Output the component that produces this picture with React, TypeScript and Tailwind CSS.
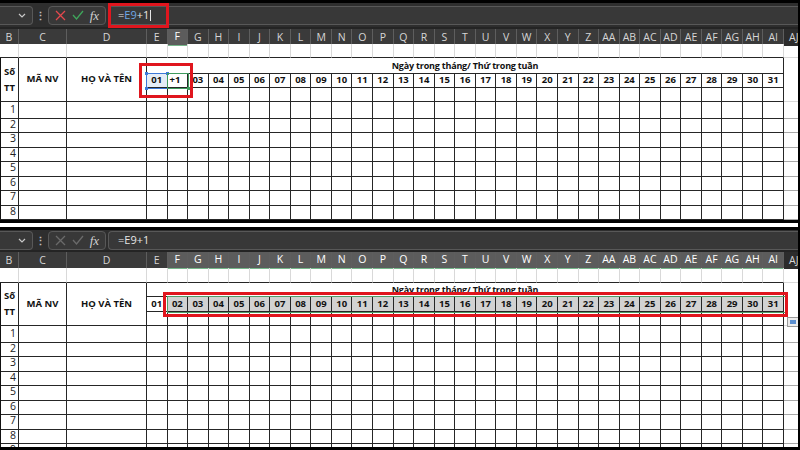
import React from 'react';

const LETTERS = ['E', 'F', 'G', 'H', 'I', 'J', 'K', 'L', 'M', 'N', 'O', 'P', 'Q', 'R', 'S', 'T', 'U', 'V', 'W', 'X', 'Y', 'Z', 'AA', 'AB', 'AC', 'AD', 'AE', 'AF', 'AG', 'AH', 'AI'];
const DAYS = LETTERS.map((_, i) => String(i + 1).padStart(2, '0'));
const ROWS = ['1', '2', '3', '4', '5', '6', '7', '8'];

const GRID = 'grid shrink-0 grid-cols-[19px_48px_80px_repeat(31,minmax(0,1fr))_14px]';
const CELL = 'border-r border-b border-[#262626]';

type Variant = 'edit' | 'fill';

const Chevron = () => (
  <svg width="8" height="5" viewBox="0 0 8 5" fill="none" stroke="#c8c8c8" strokeWidth="1.2">
    <path d="M1 1l3 3 3-3" />
  </svg>
);

function FormulaBar({ variant, h }: { variant: Variant; h: string }) {
  const edit = variant === 'edit';
  return (
    <div className={`flex shrink-0 ${h} items-center bg-[#2e2e2e]`}>
      <div className="flex h-[19px] w-[33px] items-center justify-end rounded-r-[4px] border border-l-0 border-[#585858] bg-[#383838] pr-[6px]">
        <Chevron />
      </div>
      <div className="flex w-[15px] justify-center text-[11px] font-bold leading-none text-[#bdbdbd]">⋮</div>
      <div className="flex h-[19px] w-[58px] items-center justify-around rounded-[4px] border border-[#585858] bg-[#383838] px-[3px]">
        <svg width="11" height="11" viewBox="0 0 11 11" stroke={edit ? '#e5484d' : '#6a6a6a'} strokeWidth="1.3">
          <path d="M1 1l9 9M10 1l-9 9" />
        </svg>
        <svg width="12" height="10" viewBox="0 0 12 10" fill="none" stroke={edit ? '#3fa55b' : '#6a6a6a'} strokeWidth="1.3">
          <path d="M1 5l3.5 4L11 1" />
        </svg>
        <span className="font-['Liberation_Serif',serif] text-[13px] italic leading-none text-[#d0d0d0]">fx</span>
      </div>
      <div className="ml-[2px] flex h-[19px] flex-1 items-center rounded-l-[4px] border border-r-0 border-[#585858] bg-[#383838] pl-[9px] text-[11px] text-[#e6e6e6]">
        =<span className={edit ? 'text-[#6ea8e6]' : ''}>E9</span>+1
        {edit && <span className="ml-[1px] h-[11px] w-px bg-[#e6e6e6]" />}
      </div>
    </div>
  );
}

function ColumnHeaders({ variant, h }: { variant: Variant; h: string }) {
  const cols = ['B', 'C', 'D', ...LETTERS];
  const isSel = (c: string, i: number) => (variant === 'edit' ? c === 'F' : i >= 4);
  return (
    <div className={`${GRID} ${h} bg-[#3a3a3a] text-[10.5px]`}>
      {cols.map((c, i) => (
        <div
          key={c}
          className={`flex items-center justify-center border-r border-[#5e5e5e] ${
            isSel(c, i) ? 'border-b-[1.5px] border-b-[#76b68a] bg-[#5c5c5c] text-white' : 'text-[#d6d6d6]'
          }`}
        >
          {c}
        </div>
      ))}
      <div className="flex items-center overflow-hidden bg-[#2c2c2c] pl-[5px] text-[#d6d6d6]">AJ</div>
    </div>
  );
}

function EmptyRow({ h }: { h: string }) {
  return (
    <div className={`${GRID} ${h}`}>
      {['B', 'C', 'D', ...LETTERS].map((c) => (
        <div key={c} className="border-r border-b border-[#d9d9d9] border-b-[#262626]" />
      ))}
      <div className="border-b border-[#d9d9d9]" />
    </div>
  );
}

function HeaderBlock({ variant, rows }: { variant: Variant; rows: string }) {
  const edit = variant === 'edit';
  return (
    <div className={`${GRID} ${rows} text-[9.5px] font-bold text-[#111]`}>
      <div className={`row-span-3 flex flex-col items-center justify-center border-l border-l-[#111] leading-[16px] ${CELL}`}>
        <span>Số</span>
        <span>TT</span>
      </div>
      <div className={`row-span-3 flex items-center justify-center ${CELL}`}>MÃ NV</div>
      <div className={`row-span-3 flex items-center justify-center ${CELL}`}>HỌ VÀ TÊN</div>
      <div className={`col-span-31 flex items-center justify-center text-[9px] tracking-[-0.2px] ${CELL}`}>
        Ngày trong tháng/ Thứ trong tuần
      </div>
      <div className="row-span-3 border-b border-[#d9d9d9]" />
      {DAYS.map((d, i) => {
        let cls = 'justify-center';
        let text = d;
        if (edit && i === 0) cls = 'justify-center bg-[#e4ecf7]';
        if (edit && i === 1) {
          cls = 'justify-start pl-[2px]';
          text = '+1';
        }
        if (!edit && i > 0) cls = 'justify-center bg-[#d2d2d2]';
        return (
          <div key={d} className={`flex items-center ${cls} ${CELL}`}>
            {text}
          </div>
        );
      })}
      {DAYS.map((d) => (
        <div key={d} className={CELL} />
      ))}
    </div>
  );
}

function BodyRow({ n }: { n: string }) {
  return (
    <div className={`${GRID} h-[14.5px]`}>
      <div className={`flex items-center justify-end border-l border-l-[#111] pr-[2px] text-[10.5px] text-[#222] ${CELL}`}>{n}</div>
      <div className={CELL} />
      <div className={CELL} />
      {LETTERS.map((l) => (
        <div key={l} className={CELL} />
      ))}
      <div className="border-b border-[#a8a8a8]" />
    </div>
  );
}

function Panel({ variant }: { variant: Variant }) {
  const edit = variant === 'edit';
  const rows = edit ? [...ROWS] : [...ROWS, '9'];
  return (
    <div className={`relative flex flex-col bg-white ${edit ? 'shrink-0' : 'min-h-0 flex-1 overflow-hidden'}`}>
      {edit && <div className="h-[3px] shrink-0 bg-black" />}
      <FormulaBar variant={variant} h={edit ? 'h-[24px]' : 'h-[20px]'} />
      <div className="h-[2px] shrink-0 bg-[#242424]" />
      <ColumnHeaders variant={variant} h={edit ? 'h-[15px]' : 'h-[16px]'} />
      <EmptyRow h={edit ? 'h-[14px]' : 'h-[15px]'} />
      <HeaderBlock variant={variant} rows={edit ? 'grid-rows-[16px_14px_14px]' : 'grid-rows-[14px_15px_14px]'} />
      {rows.map((n) => (
        <BodyRow key={n} n={n} />
      ))}

      {edit ? (
        <>
          <div className="absolute left-[108px] top-[3px] h-[25px] w-[61px] border-[3px] border-[#e0161e]" />
          <div className="absolute left-[146px] top-[73px] h-[16px] w-[22px] border-[1.5px] border-[#3c78d8]">
            <span className="absolute -left-[2px] -top-[2px] h-[3px] w-[3px] bg-[#3c78d8]" />
            <span className="absolute -right-[2px] -top-[2px] h-[3px] w-[3px] bg-[#3c78d8]" />
            <span className="absolute -bottom-[2px] -left-[2px] h-[3px] w-[3px] bg-[#3c78d8]" />
          </div>
          <div className="absolute left-[167px] top-[73px] h-[16px] w-[22px] border-[1.5px] border-[#3f9b5e]">
            <span className="absolute -bottom-[2px] -right-[2px] h-[3px] w-[3px] bg-[#3f9b5e]" />
          </div>
          <div className="absolute left-[139px] top-[63px] h-[35px] w-[54px] border-[3px] border-[#e0161e]" />
        </>
      ) : (
        <>
          <div className="absolute left-[167px] top-[66px] h-[17px] w-[619px] border-[1.5px] border-[#4f9d68]" />
          <div className="absolute left-[163px] top-[62px] h-[25px] w-[625px] border-[3px] border-[#e0161e]" />
          <div className="absolute left-[787px] top-[87px] flex h-[10px] w-[12px] items-center justify-center border border-[#9a9a9a] bg-[#ececec]">
            <span className="h-[4px] w-[6px] bg-[#5b8fd0]" />
          </div>
        </>
      )}
    </div>
  );
}

export default function App() {
  return (
    <div className="flex h-[450px] w-[800px] flex-col overflow-hidden border-b-[3px] border-r-[2px] border-black bg-white font-['Open_Sans','Liberation_Sans',sans-serif]">
      <Panel variant="edit" />
      <div className="h-[2px] shrink-0 bg-white" />
      <div className="h-[3px] shrink-0 bg-black" />
      <div className="h-[4px] shrink-0 bg-white" />
      <div className="h-[3px] shrink-0 bg-black" />
      <Panel variant="fill" />
    </div>
  );
}
